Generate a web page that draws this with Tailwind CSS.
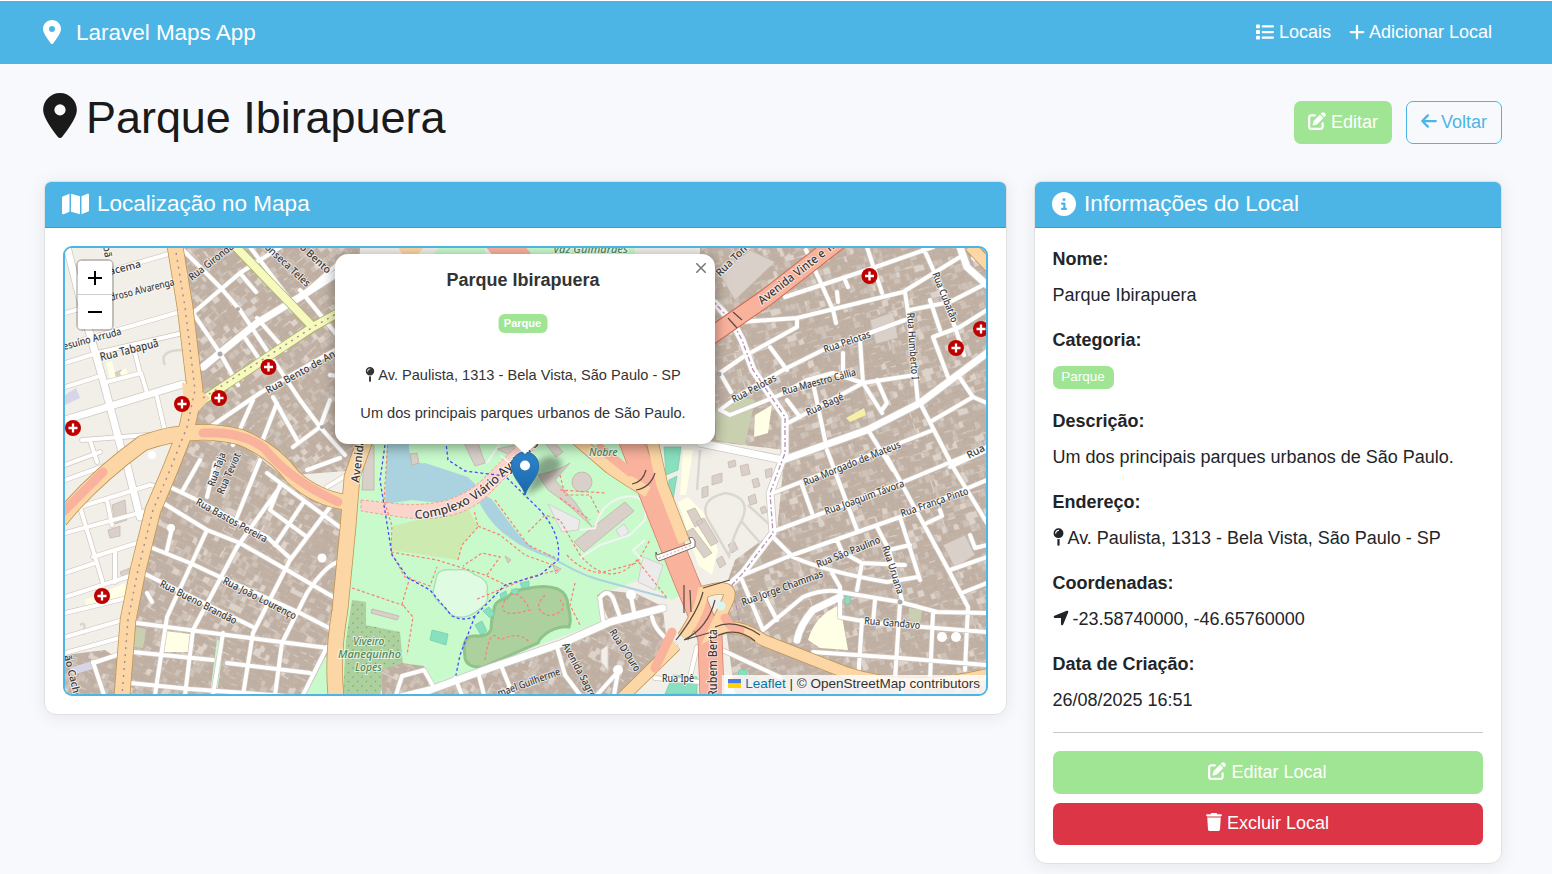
<!DOCTYPE html>
<html lang="pt-BR">
<head>
<meta charset="utf-8">
<title>Laravel Maps App</title>
<script src="https://cdn.jsdelivr.net/npm/@tailwindcss/browser@4"></script>
</head>
<body class="h-[874px] overflow-hidden bg-[#f8f9fc] font-['Liberation_Sans',Arial,sans-serif] text-[18px] leading-[27px] text-[#212529]">

<svg class="hidden" xmlns="http://www.w3.org/2000/svg">
  <symbol id="i-pin" viewBox="0 0 384 512"><path d="M215.7 499.2C267 435 384 279.4 384 192C384 86 298 0 192 0S0 86 0 192c0 87.4 117 243 168.3 307.2c12.3 15.3 35.1 15.3 47.4 0zM192 128a64 64 0 1 1 0 128 64 64 0 1 1 0-128z"/></symbol>
  <symbol id="i-list" viewBox="0 0 512 512"><rect x="0" y="40" width="112" height="112" rx="24"/><rect x="0" y="200" width="112" height="112" rx="24"/><rect x="0" y="360" width="112" height="112" rx="24"/><rect x="160" y="64" width="352" height="64" rx="32"/><rect x="160" y="224" width="352" height="64" rx="32"/><rect x="160" y="384" width="352" height="64" rx="32"/></symbol>
  <symbol id="i-plus" viewBox="0 0 448 512"><path d="M256 80c0-17.7-14.3-32-32-32s-32 14.3-32 32V224H48c-17.7 0-32 14.3-32 32s14.3 32 32 32H192V432c0 17.7 14.3 32 32 32s32-14.3 32-32V288H400c17.7 0 32-14.3 32-32s-14.3-32-32-32H256V80z"/></symbol>
  <symbol id="i-left" viewBox="0 0 448 512"><path d="M9.4 233.4c-12.5 12.5-12.5 32.8 0 45.3l160 160c12.5 12.5 32.8 12.5 45.3 0s12.5-32.8 0-45.3L109.2 288 416 288c17.7 0 32-14.3 32-32s-14.3-32-32-32l-306.7 0L214.6 118.6c12.5-12.5 12.5-32.8 0-45.3s-32.8-12.5-45.3 0l-160 160z"/></symbol>
  <symbol id="i-edit" viewBox="0 0 512 512"><path d="M471.6 21.7c-21.9-21.9-57.3-21.9-79.2 0L362.3 51.7l97.9 97.9 30.1-30.1c21.9-21.9 21.9-57.3 0-79.2L471.6 21.7zm-299.2 220c-6.1 6.1-10.8 13.6-13.5 21.9l-29.6 88.8c-2.9 8.6-.6 18.1 5.8 24.6s15.9 8.7 24.6 5.8l88.8-29.6c8.2-2.7 15.7-7.4 21.9-13.5L437.7 172.3 339.7 74.3 172.4 241.7zM96 64C43 64 0 107 0 160V416c0 53 43 96 96 96H352c53 0 96-43 96-96V320c0-17.7-14.3-32-32-32s-32 14.3-32 32v96c0 17.7-14.3 32-32 32H96c-17.7 0-32-14.3-32-32V160c0-17.7 14.3-32 32-32h96c17.7 0 32-14.3 32-32s-14.3-32-32-32H96z"/></symbol>
  <symbol id="i-trash" viewBox="0 0 448 512"><path d="M135.2 17.7L128 32H32C14.3 32 0 46.3 0 64S14.3 96 32 96H416c17.7 0 32-14.3 32-32s-14.3-32-32-32H320l-7.2-14.3C307.4 6.8 296.3 0 284.2 0H163.8c-12.1 0-23.2 6.8-28.6 17.7zM416 128H32L53.2 467c1.6 25.3 22.6 45 47.9 45H346.9c25.3 0 46.3-19.7 47.9-45L416 128z"/></symbol>
  <symbol id="i-info" viewBox="0 0 512 512"><path d="M256 512A256 256 0 1 0 256 0a256 256 0 1 0 0 512zM216 336h24V272H216c-13.3 0-24-10.7-24-24s10.7-24 24-24h48c13.3 0 24 10.7 24 24v88h8c13.3 0 24 10.7 24 24s-10.7 24-24 24H216c-13.3 0-24-10.7-24-24s10.7-24 24-24zm40-208a32 32 0 1 1 0 64 32 32 0 1 1 0-64z"/></symbol>
  <symbol id="i-map" viewBox="0 0 576 512"><path d="M384 476.1L192 421.2V35.9L384 90.8V476.1zm32-1.2V88.4L543.1 37.5c15.8-6.3 32.9 5.3 32.9 22.3V394.6c0 9.8-6 18.6-15.1 22.3L416 474.8zM15.1 95.1L160 37.2V423.6L32.9 474.5C17.1 480.8 0 469.2 0 452.2V117.4c0-9.8 6-18.6 15.1-22.3z"/></symbol>
  <symbol id="i-mappin" viewBox="0 0 320 512"><path d="M16 144a144 144 0 1 1 288 0A144 144 0 1 1 16 144zM160 80c8.8 0 16-7.2 16-16s-7.2-16-16-16c-53 0-96 43-96 96c0 8.8 7.2 16 16 16s16-7.2 16-16c0-35.3 28.7-64 64-64zM128 480V317.1c10.4 1.9 21.1 2.9 32 2.9s21.6-1 32-2.9V480c0 17.7-14.3 32-32 32s-32-14.3-32-32z"/></symbol>
  <symbol id="i-arrow" viewBox="0 0 448 512"><path d="M429.6 92.1c4.9-11.9 2.1-25.6-7-34.7s-22.8-11.9-34.7-7l-352 144c-14.2 5.8-22.2 20.8-19.3 35.8s16.1 25.8 31.4 25.8H224V432c0 15.3 10.8 28.4 25.8 31.4s30-5.1 35.8-19.3l144-352z"/></symbol>
</svg>

<div class="h-px bg-white"></div>
<nav class="flex h-[63px] items-center bg-[#4db5e6] pr-[60px] pb-px pl-[43px] text-white">
  <svg class="h-[24px] w-[18px] fill-current"><use href="#i-pin"/></svg>
  <span class="ml-[15px] text-[22.5px] tracking-[-0.02px] whitespace-nowrap">Laravel Maps App</span>
  <div class="ml-auto flex items-center">
    <svg class="mr-[5px] size-[18px] fill-current"><use href="#i-list"/></svg><span>Locais</span>
    <svg class="mr-[4px] ml-[18px] h-[18px] w-[16px] fill-current"><use href="#i-plus"/></svg><span>Adicionar Local</span>
  </div>
</nav>

<div class="flex h-[117px] pr-[50px] pl-[43px]">
  <svg class="mt-[29px] h-[45px] w-[34px] fill-[#1a1a1a]"><use href="#i-pin"/></svg>
  <h1 class="mt-[27px] ml-[9px] text-[45px] leading-[54px] tracking-[-0.05px] text-[#1a1a1a]">Parque Ibirapuera</h1>
  <div class="mt-[37px] ml-auto flex h-[43px] gap-[14px]">
    <div class="flex w-[98px] items-center justify-center rounded-[7px] bg-[#a0e594] text-white"><svg class="mr-[5px] mb-[3px] size-[18px] fill-current"><use href="#i-edit"/></svg>Editar</div>
    <div class="flex w-[96px] items-center justify-center rounded-[7px] border border-[#4db5e6] text-[#4db5e6]"><svg class="mr-[4px] mb-[3px] h-[18px] w-[16px] fill-current"><use href="#i-left"/></svg>Voltar</div>
  </div>
</div>

<main class="flex items-start gap-[27px] pl-[44px]">
  <section class="h-[534px] w-[963px] overflow-hidden rounded-t-[7px] rounded-b-[12px] border border-[#dfe1e3] bg-white shadow-[0_2px_18px_rgba(0,0,0,0.08)]">
    <div class="flex h-[46px] items-center border-b border-[#3d9bcb] bg-[#4db5e6] pb-[2px] pl-[17px] text-[22.5px] text-white">
      <svg class="mr-[8px] h-[24px] w-[27px] fill-current"><use href="#i-map"/></svg>Localização no Mapa
    </div>
    <div class="relative mx-[18px] mt-[18px] h-[450px] overflow-hidden rounded-[9px] border-2 border-[#4db5e6] bg-[#f2efe9]">
      <svg class="block h-[446px] w-[921px]" viewBox="65 248 921 446" font-family="Noto Sans, sans-serif">
        <defs>
          <pattern id="blkE" width="150" height="150" patternUnits="userSpaceOnUse" patternTransform="rotate(-17)"><rect width="150" height="150" fill="#ddd3ca"/><g class="houses"></g></pattern>
          <pattern id="blkW" width="150" height="150" patternUnits="userSpaceOnUse" patternTransform="rotate(27)"><rect width="150" height="150" fill="#ddd3ca"/><g class="houses"></g></pattern>
          <pattern id="blkN" width="150" height="150" patternUnits="userSpaceOnUse" patternTransform="rotate(-38)"><rect width="150" height="150" fill="#ddd3ca"/><g class="houses"></g></pattern>
          <pattern id="trees" width="9" height="9" patternUnits="userSpaceOnUse"><rect width="9" height="9" fill="#add19e"/><circle cx="2" cy="2" r=".8" fill="#6fae62"/><circle cx="6.500" cy="6.500" r=".8" fill="#6fae62"/></pattern>
          <path id="cplx" d="M415 519C450 517 478 502 498 482L548 436"/>
          <g id="minor" fill="none" stroke-linejoin="round" stroke-linecap="round">
            <path d="M113 270L172 253M65 313L83 308M83 340L183 311M65 363L97 353L183 333M65 387L97 377M103 383L141 373L147 393M135 353L140 373M157 397L167 440M82 440L187 432M90 440L97 462M65 465L100 452"/>
            <path d="M80 507L150 485L165 488M80 507L103 583M65 533L150 510M93 557L137 543L150 546M115 552V582M65 573L95 563M65 597L133 575M65 613L127 598M65 637L123 620M65 653L123 637M93 663L123 653M93 662L104 695M107 500L112 525M65 480L107 465"/>
            <path d="M183 250L220 287L240 310L300 400L320 427M193 313L240 273L330 215M193 313L220 353L238 385M240 273L256 292M210 427L260 393L342 346M253 400L233 445M273 397L297 440M320 427L293 447M300 290L345 345M277 403L258 452M320 427L345 455M330 375L345 377M243 335L268 372M257 318L285 350M340 262L300 297M330 400L320 427M250 247L290 300"/>
            <path d="M170 487L197 500L267 537L290 558M163 503L207 530L240 543L287 570L335 598M150 547L190 563L220 577L300 613L335 631M143 573L253 627M137 623L227 635L328 648M133 652L213 660M227 663L310 673M130 683L190 689L300 697M207 530L167 617L155 695M260 460L237 517M303 503L275 545M280 487L237 547L193 630L185 695M330 507L290 560L253 633L243 695M340 562Q328 562 307 593L282 643L275 695M223 633L213 695M267 473L345 531M270 510L307 537M200 460L183 490M215 463L207 497M280 485L270 510M327 647L303 695M307 470L340 458M327 487L350 473M172 528L167 550M147 593L152 602"/>
            <path d="M740 322L797 318L903 292L960 257M785 297L867 270L933 247M806 250L833 310L836 323M867 247L882 293M923 247L940 285L957 333L964 355M930 300L940 330M905 292L911 333L918 403M910 310L950 302L987 283M720 373L743 357L797 327V318M720 410L743 393L783 370L823 350L905 320M720 410L730 415L780 395L807 380L833 373L863 383L915 375M788 423L863 383M770 347L787 370M720 373L731 392M843 353V373M860 340L863 383L882 413M813 383L825 440M787 400L800 417M877 380L887 403L882 410M868 430L893 470M920 403L953 467L987 523M930 422L973 397L987 403M960 378L973 397M933 337L960 327L987 310M933 337L948 377M845 280L848 287M837 292L838 302"/>
            <path d="M773 493L933 430M950 467L987 450M777 530L823 513L903 482L987 447M743 575L787 557L900 517L987 480M827 450L857 530M887 457L923 523L950 573L968 607M802 485L812 513M773 537L793 557Q827 572 887 582L918 577M837 540L842 552L862 563L905 565M900 517L920 580M877 527L889 550L902 600M889 550L910 545M862 563L857 590M832 573L840 587V617M763 630L803 597Q825 588 840 592L900 602L937 612L987 613M742 580L763 630M763 593L777 620M840 617L873 623L987 632M813 652L900 658L987 665M862 620L858 682M900 603L895 680M933 613L930 680M968 607L965 670M950 570L987 557M962 593L987 583M722 650L780 677M697 647L690 677M655 678L700 682M873 623L875 600M927 523L942 516L940 510M970 535L975 548L987 545"/>
            <path d="M500 663L513 695M557 647L565 675L580 695M603 620L600 598Q607 588 613 598L620 617M631 597L634 612M652 617Q655 632 675 645M455 678L462 695M478 672L484 695M396 695L402 676L424 670L432 684M597 695L615 675M614 695L618 672"/>
          </g>
          <g id="major" fill="none" stroke-linejoin="round" stroke-linecap="round">
            <path d="M67 247L83 310L103 380L122 452M65 420L183 384M127 465L140 517M203 367L220 353L257 323L300 297L345 268M700 443L783 460L867 430L920 403L987 353M960 247L967 267L987 285M797 640Q800 625 813 610L840 597M380 702L430 690L490 668L563 643L610 622L663 608M715 303L733 323L742 340L753 370L785 417V453L770 493L773 533L743 573L732 583L705 592"/>
          </g>
          <path id="ora" fill="none" d="M175 246L185 307L195 390L187 427L170 470L153 510L138 570L128 620L122 696M60 520Q92 480 143 443Q193 425 240 437Q273 450 293 477Q318 500 352 503M365 440L352 477L348 527L340 610Q332 655 336 697"/>
          <path id="ora2" fill="none" d="M575 438L610 468Q630 482 648 492M652 440L662 485L684 542M683 637Q700 612 703 592Q735 582 728 600L713 632Q735 620 763 640L847 673Q910 694 990 674M676 645L622 698M970 246L990 267"/>
          <path id="red" fill="none" d="M630 438L650 490L687 583L710 637L712 696"/>
          <path id="redNE" fill="none" d="M705 340L767 297L840 240"/>
          <path id="yel" fill="none" d="M235 246L313 327M203 400L313 327L345 309"/>
          <g id="hosp"><circle r="8" fill="#bf0000"/><path d="M-4.500 0H4.500M0-4.500V4.500" stroke="#fff" stroke-width="2.300" fill="none"/></g>
        </defs>

        <!-- built-up areas -->
        <path fill="url(#blkN)" d="M180 246H360V470L293 475L240 437L190 430Z"/>
        <path fill="url(#blkW)" d="M190 440L240 442L300 490L350 505L340 694H125L150 530Z"/>
        <path fill="url(#blkE)" d="M700 246H987V694H735L722 600L745 575L777 530L785 450L700 440Z"/>
        <path fill="url(#blkW)" d="M65 655L105 650L120 660V694H65Z"/>
        <path fill="url(#blkE)" d="M735 560L765 538L770 545L742 578L728 580Z"/>
        <g fill="#d9d0c9" stroke="#c4b5a9" stroke-width=".7">
          <path d="M112 505L125 500L127 520L115 524ZM108 530L120 526V536L110 538ZM120 572L130 568L132 574L122 577ZM720 275L750 250L775 262L735 300ZM943 545L965 535L975 555L955 568ZM870 320L893 312L898 338L876 344ZM115 373L121 370V378L115 380Z"/>
          <path d="M712 476L722 473V482L712 485ZM728 462L735 460L736 466L729 468ZM740 466L748 464L750 474L742 476ZM752 480L758 478L760 486L754 488ZM765 470L772 468V476L766 478ZM748 497L755 494L757 503L750 505ZM702 488L708 486V496L702 498ZM760 508L765 506L767 512L762 514ZM728 545L734 541L738 549L732 553ZM716 560L722 556L726 564L720 568Z"/>
        </g>
        <g fill="#ffffe5"><path d="M106 363L112 361L116 378L110 380ZM120 372L126 368L128 375L121 377ZM85 600L125 583L127 597L87 608ZM165 631L190 634L188 652L164 652ZM755 415L772 405L768 433L754 437ZM678 502L688 497L706 515L718 550L712 575L698 565ZM683 450L693 450L686 495L680 495ZM808 640Q815 615 840 605L848 650L820 648Z"/><path fill="#f5f0a6" d="M846 418L864 408L866 415L850 422Z"/></g>
        <path fill="#d9d0c9" stroke="#c4b5a9" stroke-width=".8" d="M687 511L695 508L703 522L695 527ZM686 532L693 528L712 553L704 558ZM696 522L704 518L718 542L711 546Z"/>
        <path fill="#c8d0b0" d="M716 408L740 396L755 400L745 445L716 440ZM909 608L922 610L920 625L909 618ZM136 627L146 629L143 648L133 647Z"/>
        <g fill="none" stroke="#dad6d0" stroke-width="2.500"><path d="M722 494Q700 500 707 518L729 556Q733 535 742 520Q752 497 725 493ZM700 450L697 490M742 522L762 545M165 365Q158 350 183 350M748 505L770 525M80 625Q87 620 83 635"/></g>
        <path fill="#d7d5e8" d="M65 395L76 388L80 398L65 405ZM70 668L95 660L96 668L72 675Z"/>

        <!-- park -->
        <path fill="#c8facc" d="M362 440H628L655 500L690 590L672 600L640 580L597 595L606 620L490 664L430 690L410 665L385 672L382 694H342L345 600L355 500Z"/>
        <path fill="#c8facc" d="M327 655L333 694H306ZM353 560L350 590L356 530ZM217 640L224 642L217 694H210ZM653 650L662 645L665 655L650 662Z"/>
        <path fill="url(#trees)" d="M352 600L366 602V625L400 632L403 665L385 680L380 694H343L346 640Z"/>
        <path fill="#aad3df" d="M387 443H409Q408 465 425 463L468 477L478 487L460 503L430 502L412 500L385 504Z"/>
        <path fill="#aad3df" d="M478 500Q487 492 494 502L515 530Q535 555 555 556L553 559Q525 550 510 538Q490 525 478 500Z"/>
        <path fill="none" stroke="#aad3df" stroke-width="2" d="M545 553Q575 573 600 580L667 598"/>
        <path fill="#cdebb0" d="M393 526L468 508L478 527L462 545L458 560L391 550Z"/>
        <path fill="#dffce2" stroke="#a5dcb0" stroke-width="1.200" d="M437 575Q440 568 456 570Q468 568 475 575Q490 580 487 592Q490 602 481 608Q472 616 463 617Q450 618 446 608Q430 597 434 588Z"/>
        <path fill="#add19e" stroke="#8fc38a" stroke-width="3" stroke-linejoin="round" d="M464 645Q466 635 475 636Q487 637 491 630Q491 620 494 610Q494 601 507 598Q513 590 525 589Q545 584 558 589Q568 594 568 606Q572 620 569 627Q560 626 550 631Q540 637 538 643L483 667Q467 668 465 658Z"/>
        <path fill="#88e0be" stroke="#6fcdaa" stroke-width=".7" d="M432 630L448 634L446 645L430 640ZM500 594L506 591L507 596L501 599ZM511 590L517 588L519 593L513 595ZM520 583L529 581V587L522 588ZM483 611L489 607L495 614L490 618ZM475 625L482 621L487 631L481 635ZM664 447L681 447L678 470L666 475ZM669 480L677 476L673 500L668 496ZM739 670H747V676H738ZM845 596H850V604H845ZM673 675L697 677V694H665Z"/>
        <g fill="#d9d0c9" stroke="#c4b0a6" stroke-width=".8">
          <path d="M574 542L625 502L634 511L584 552ZM538 475Q560 470 570 463L555 480L575 502L592 527Q570 505 548 490ZM464 443H478L485 463L475 466ZM497 449L515 445L525 443L510 455ZM372 609L399 616L397 620L371 613ZM410 454L417 453L419 463L412 465ZM505 556L511 560L508 563ZM553 565L561 569L556 574ZM545 443H555L563 452L556 457ZM365 445H374V490H362Z"/>
          <circle cx="582" cy="482" r="10"/>
          <path fill="#ebebeb" stroke="#cfc9c9" d="M548 504L580 520L578 530L562 532ZM643 557L663 565L655 590L638 582ZM616 530L624 524L629 532L621 538Z"/>
        </g>
        <path fill="#fbd5cb" stroke="#f3a193" stroke-dasharray="3 2" d="M361 500L400 504Q450 508 480 482L520 443H540L490 493Q460 525 400 517L361 511Z"/>
        <g fill="none" stroke="#fa8072" stroke-width="1.200" stroke-dasharray="3 2.200">
          <path d="M388 440L384 500L392 526L391 552L405 577L430 586L437 567M391 552L437 560L485 575L510 587M478 526L500 535L525 555L553 565M458 560L462 545L478 527L474 510M410 577L402 604L413 617L407 655M352 588L405 606M487 575L500 557L482 553L463 566M495 500L528 545L555 558M528 532L545 515L560 520L580 555Q610 590 637 560L667 598M560 498L590 520M567 555Q580 570 600 573L637 563L650 540M575 583L570 605L580 625M558 570L530 577L475 600M560 475L565 495L590 495L600 515M505 600Q495 620 530 610Q520 590 510 595M545 595Q530 610 550 616Q570 610 560 600M485 660Q490 625 500 640Q520 630 530 643M600 445L620 465L655 485M560 490L605 493"/>
        </g>
        <path fill="none" stroke="#f3f3f3" stroke-width="2" d="M580 558L600 545L630 535L645 520Q648 490 620 498Q600 505 595 528L580 530M645 540L633 550L642 560M487 463L500 443M500 455L510 463"/>
        <path fill="none" stroke="#4a4aff" stroke-width="1.300" stroke-dasharray="3 2.500" d="M385 445L380 480L392 555L408 578L430 590L452 616Q464 622 475 616L505 585L540 575L558 560Q562 535 540 510L505 476L465 471L448 460L446 443M475 616L460 655L455 680"/>
        <path fill="url(#blkW)" d="M382 670L402 663L424 666L430 690L382 697ZM430 694L490 670L563 645L610 624L663 610L668 650L630 694ZM597 595L605 590L637 594L662 606L609 620Z"/>
        <path fill="#f2efe9" stroke="#d9d0c9" d="M601 650L608 645V670L601 662Z"/>

        <!-- streets -->
        <use href="#minor" stroke="#d0c7be" stroke-width="5.400"/>
        <use href="#major" stroke="#cfc9c3" stroke-width="8.600"/>
        <use href="#minor" stroke="#fff" stroke-width="4"/>
        <use href="#major" stroke="#fff" stroke-width="7"/>
        <g fill="#fff"><circle cx="171" cy="528" r="4"/><circle cx="322" cy="558" r="4.500"/><circle cx="631" cy="595" r="5"/><circle cx="618" cy="670" r="5"/><circle cx="942" cy="637" r="5"/><circle cx="956" cy="637" r="5"/><circle cx="975" cy="257" r="4"/><circle cx="152" cy="455" r="4"/></g>
        <path fill="none" stroke="#b58fb5" stroke-width="1.300" stroke-dasharray="2 2 5 3" d="M715 303L733 323L742 340L753 370L785 417V453L770 493L773 533L743 573L732 585L740 625"/>
        <use href="#yel" stroke="#a8b35e" stroke-width="9.500"/><use href="#yel" stroke="#f7fabf" stroke-width="8"/>
        <use href="#red" stroke="#d08068" stroke-width="25"/><use href="#redNE" stroke="#cd6d55" stroke-width="18"/>
        <use href="#ora" stroke="#bd9450" stroke-width="16.500"/><use href="#ora2" stroke="#bd9450" stroke-width="12.500"/>
        <use href="#red" stroke="#f9b29c" stroke-width="23.500"/><use href="#redNE" stroke="#f9b29c" stroke-width="16"/>
        <use href="#ora" stroke="#fcd6a4" stroke-width="15"/><use href="#ora2" stroke="#fcd6a4" stroke-width="11"/>
        <path fill="#fcd6a4" d="M182 382L202 392L210 398L195 415L184 402Z"/>
        <path fill="none" stroke="#f9b29c" stroke-width="9" stroke-linecap="round" d="M203 433Q243 431 265 449Q290 480 338 502M60 515L103 472M672 632L655 668M600 448L630 472M725 618Q730 628 740 630"/>
        <path fill="none" stroke="#a58a8f" stroke-width="1.400" stroke-dasharray="2 5" d="M175 246L185 307L195 390L187 427L170 470L153 510L138 570L128 620L122 696M203 398L313 327L345 309"/>
        <path fill="none" stroke="#5b4a42" stroke-width="1.200" d="M684 585V613M690 590L691 612M703 592Q698 612 676 640M715 600Q708 628 684 640L712 632M713 638Q735 625 755 641M715 627Q735 618 760 635M636 490Q650 488 655 473M632 484Q643 482 646 470M703 588L730 580M733 312L742 320M728 318L737 328"/>
        <path fill="#fff" stroke="#5b4a42" stroke-width=".8" d="M657 555L691 543L689 538Q693 536 695 541V547L659 561Q655 559 656 552Z"/>
        <path fill="none" stroke="#e79a90" stroke-dasharray="2 2" d="M659 558L692 545"/>
        <circle cx="721" cy="606" r="4.500" fill="#d9f6ee"/>
        <g fill="#aaa"><circle cx="220" cy="354" r="2.500"/><circle cx="238" cy="309" r="2"/><circle cx="719" cy="374" r="2.500"/><circle cx="900" cy="602" r="2.500"/><circle cx="322" cy="427" r="2"/></g>
        <path fill="#fcd6a4" d="M397 246H425L415 258H405Z"/><path fill="#f9b29c" d="M485 246H525L535 258H495Z"/><path fill="#c8facc" d="M440 246H485V258H430ZM525 246H635V258H535Z"/>

        <!-- labels -->
        <g font-size="10.300" fill="#3a3a3a" stroke="#fff" stroke-opacity=".65" stroke-width="2" paint-order="stroke" font-weight="500">
          <text transform="translate(110 275) rotate(-14)">acema</text>
          <text transform="translate(111 301) rotate(-14)" textLength="66">droso Alvarenga</text>
          <text transform="translate(64 350) rotate(-15)" textLength="60">esuíno Arruda</text>
          <text transform="translate(101 361) rotate(-14)" font-size="11.500" textLength="60">Rua Tabapuã</text>
          <text transform="translate(192 281) rotate(-38)" textLength="54">Rua Gironda</text>
          <text transform="translate(264 248) rotate(43)" textLength="58">onseca Teles</text>
          <text transform="translate(299 248) rotate(43)">o Bento</text>
          <text transform="translate(103 246) rotate(80)">pã</text>
          <text transform="translate(268 394) rotate(-29)" textLength="84">Rua Bento de And</text>
          <text transform="translate(214 487) rotate(-70)" textLength="35">Rua Taja</text>
          <text transform="translate(223 495) rotate(-66)" textLength="44">Rua Teviot</text>
          <text transform="translate(195 504) rotate(29)" textLength="80">Rua Bastos Pereira</text>
          <text transform="translate(159 586) rotate(27)" textLength="85">Rua Bueno Brandão</text>
          <text transform="translate(222 583) rotate(27)" textLength="81">Rua João Lourenço</text>
          <text transform="translate(64 656) rotate(76)">ão Cacho</text>
          <text transform="translate(359 483) rotate(-83)" font-size="11.500">Avenida</text>
          <text transform="translate(499 697) rotate(-20)" textLength="66">mael Guilherme</text>
          <text transform="translate(562 645) rotate(62)" textLength="65">Avenida Sagres</text>
          <text transform="translate(609 632) rotate(57)" textLength="48">Rua D'Ouro</text>
          <text x="662" y="682" textLength="32">Rua Ipê</text>
          <text transform="translate(717 697) rotate(-90)" font-size="12" textLength="68">Rubem Berta</text>
          <text font-size="12.300"><textPath href="#cplx">Complexo Viário Ayrton Senna</textPath></text>
          <text transform="translate(762 305) rotate(-38)" font-size="12" textLength="106">Avenida Vinte e Três</text>
          <text transform="translate(720 277) rotate(-45)">Rua Tomás</text>
          <text transform="translate(825 353) rotate(-19)" textLength="49">Rua Pelotas</text>
          <text transform="translate(734 403) rotate(-28)" textLength="49">Rua Pelotas</text>
          <text transform="translate(783 395) rotate(-15)" textLength="76">Rua Maestro Cállia</text>
          <text transform="translate(808 416) rotate(-25)" textLength="40">Rua Bagé</text>
          <text transform="translate(907 313) rotate(86)" textLength="67">Rua Humberto I</text>
          <text transform="translate(932 274) rotate(68)" textLength="53">Rua Cubatão</text>
          <text transform="translate(805 486) rotate(-22)" textLength="104">Rua Morgado de Mateus</text>
          <text transform="translate(826 515) rotate(-20)" textLength="84">Rua Joaquim Távora</text>
          <text transform="translate(902 517) rotate(-19)" textLength="71">Rua França Pinto</text>
          <text transform="translate(818 568) rotate(-22)" textLength="68">Rua São Paulino</text>
          <text transform="translate(743 606) rotate(-20)" textLength="86">Rua Jorge Chammas</text>
          <text transform="translate(882 547) rotate(72)" textLength="50">Rua Uruana</text>
          <text transform="translate(864 624) rotate(5)" textLength="56">Rua Gandavo</text>
          <text transform="translate(969 459) rotate(-28)">Rua Ho</text>
          <g fill="#4d8a5c" font-style="italic">
            <text x="553" y="253" textLength="75">Vaz Guimarães</text><text x="589" y="456">Nobre</text>
            <text x="353" y="645">Viveiro</text><text x="338" y="658" textLength="63">Manequinho</text><text x="355" y="671">Lopes</text>
          </g>
        </g>
        <use href="#hosp" x="182" y="404"/><use href="#hosp" x="219" y="398"/><use href="#hosp" x="268.500" y="367"/><use href="#hosp" x="73" y="428"/><use href="#hosp" x="102" y="596"/><use href="#hosp" x="869.500" y="276"/><use href="#hosp" x="956" y="348"/><use href="#hosp" x="981" y="329"/>

        <!-- marker with its shadow -->
        <defs><filter id="soft" x="-50%" y="-50%" width="200%" height="200%"><feGaussianBlur stdDeviation="3"/></filter><linearGradient id="mk" x2="0" y2="1"><stop stop-color="#2e85cb"/><stop offset="1" stop-color="#1a66ab"/></linearGradient></defs>
        <path d="M526 495L537 463Q550 450 562 462Q560 478 526 495Z" fill="#000" opacity=".35" filter="url(#soft)"/>
        <path d="M525.200 495C523.500 486 511.500 478 511.500 465.500A13.600 13.600 0 0 1 538.700 465.500C538.700 478 527 486 525.200 495Z" fill="url(#mk)" stroke="#2a6da8" stroke-width="1"/>
        <circle cx="525" cy="465.500" r="5" fill="#fff"/>
      </svg>

      <div class="absolute top-[11px] left-[11px] w-[38px] rounded-[6px] border-2 border-black/20 bg-clip-padding">
        <div class="flex h-[34px] items-center justify-center rounded-t-[3px] border-b border-[#ccc] bg-white"><svg class="size-[14px]" viewBox="0 0 14 14"><path d="M0 7H14M7 0V14" stroke="#000" stroke-width="2"/></svg></div>
        <div class="flex h-[34px] items-center justify-center rounded-b-[3px] bg-white"><svg class="size-[14px]" viewBox="0 0 14 14"><path d="M0 7H14" stroke="#000" stroke-width="2"/></svg></div>
      </div>

      <div class="absolute top-[6px] left-[270px] h-[190px] w-[380px] rounded-[13px] bg-white text-center text-[14.6px] leading-[20px] text-[#333] shadow-[0_3px_14px_rgba(0,0,0,0.4)]">
        <div class="mt-[15px] pr-[4px] text-[18px] leading-[22px] font-bold">Parque Ibirapuera</div>
        <div class="mx-auto mt-[23px] h-[19px] w-[49px] -translate-x-[2.500px] rounded-[6px] bg-[#a0e594] text-[11px] leading-[18px] font-bold text-white">Parque</div>
        <div class="mt-[32px] flex items-center justify-center pr-[4px]"><svg class="mr-[3px] mb-[2px] h-[15px] w-[10px] fill-current"><use href="#i-mappin"/></svg>Av. Paulista, 1313 - Bela Vista, São Paulo - SP</div>
        <div class="mt-[18px] pr-[4px]">Um dos principais parques urbanos de São Paulo.</div>
        <svg class="absolute top-[9px] right-[9px] size-[10px]" viewBox="0 0 10 10"><path d="M.3.3L9.700 9.700M9.700.3L.3 9.700" stroke="#757575" stroke-width="1.500"/></svg>
        <svg class="absolute top-[189px] left-[178px] h-[12px] w-[24px]" viewBox="0 0 24 12"><path d="M0 0H24L12 11Z" fill="#fff"/></svg>
      </div>

      <div class="absolute right-0 bottom-0 flex h-[19px] items-center bg-white/80 pr-[6px] pb-[2px] pl-[6px] text-[13.5px] whitespace-pre text-[#333]"><svg class="mr-[4px] h-[9px] w-[13px]" viewBox="0 0 13 9"><path fill="#4c7be1" d="M0 0H13V4.500H0Z"/><path fill="#ffd500" d="M0 4.500H13V9H0Z"/></svg><span class="text-[#0078a8]">Leaflet</span> | © OpenStreetMap contributors</div>
    </div>
  </section>

  <section class="h-[683px] w-[468px] overflow-hidden rounded-t-[7px] rounded-b-[12px] border border-[#dfe1e3] bg-white shadow-[0_2px_18px_rgba(0,0,0,0.08)]">
    <div class="flex h-[46px] items-center border-b border-[#3d9bcb] bg-[#4db5e6] pb-[2px] pl-[17px] text-[22.5px] text-white">
      <svg class="mr-[8px] size-[24px] fill-current"><use href="#i-info"/></svg>Informações do Local
    </div>
    <div class="px-[18px] pt-[18px]">
      <dl class="-ml-[0.5px] grid gap-[18px] [&_dd]:mt-[9px] [&_dd]:h-[27px] [&_dt]:h-[27px] [&_dt]:font-bold">
        <div><dt>Nome:</dt><dd>Parque Ibirapuera</dd></div>
        <div><dt>Categoria:</dt><dd class="flex items-end pb-[1px]"><span class="h-[23px] w-[61px] rounded-[7px] bg-[#a0e594] text-center text-[13.5px] leading-[22px] text-white">Parque</span></dd></div>
        <div><dt>Descrição:</dt><dd>Um dos principais parques urbanos de São Paulo.</dd></div>
        <div><dt>Endereço:</dt><dd class="flex items-center"><svg class="mr-[4px] mb-[3px] h-[18px] w-[11px] fill-current"><use href="#i-mappin"/></svg>Av. Paulista, 1313 - Bela Vista, São Paulo - SP</dd></div>
        <div><dt>Coordenadas:</dt><dd class="flex items-center"><svg class="mr-[4px] mb-[3px] h-[18px] w-[16px] fill-current"><use href="#i-arrow"/></svg>-23.58740000, -46.65760000</dd></div>
        <div><dt>Data de Criação:</dt><dd>26/08/2025 16:51</dd></div>
      </dl>
      <div class="mt-[18px] h-px bg-[#c8c9ca]"></div>
      <div class="mt-[18px] flex h-[43px] items-center justify-center rounded-[7px] bg-[#a0e594] pr-[1px] text-white"><svg class="mr-[5px] mb-[3px] size-[18px] fill-current"><use href="#i-edit"/></svg>Editar Local</div>
      <div class="mt-[9px] flex h-[42px] items-center justify-center rounded-[7px] bg-[#dc3545] pr-[1px] pb-[2px] text-white"><svg class="mr-[5px] mb-[2px] h-[18px] w-[16px] fill-current"><use href="#i-trash"/></svg>Excluir Local</div>
    </div>
  </section>
</main>

<script>
  // Fill each city-block pattern with small house footprints from a seeded generator.
  document.querySelectorAll('.houses').forEach((g, k) => {
    let s = 7 + k * 31;
    const rnd = () => (s = (s * 16807) % 2147483647) / 2147483647;
    let h = '';
    for (let y = 0; y < 150; y += 6) {
      for (let x = 0; x < 148;) {
        const w = 2 + rnd() * 5, t = 4.4 + rnd() * 2;
        if (rnd() > 0.08) h += `<rect x="${x.toFixed(1)}" y="${(y + rnd()).toFixed(1)}" width="${w.toFixed(1)}" height="${t.toFixed(1)}" fill="${rnd() > 0.2 ? '#c1b1a5' : '#cfc3b9'}" stroke="#b5a496" stroke-width=".35"/>`;
        x += w + rnd() * 0.6;
      }
    }
    g.innerHTML = h;
  });
  // Fit street names to their streets by scaling the glyphs as well as the gaps.
  document.querySelectorAll('text[textLength]').forEach(t => t.setAttribute('lengthAdjust', 'spacingAndGlyphs'));
</script>
</body>
</html>
